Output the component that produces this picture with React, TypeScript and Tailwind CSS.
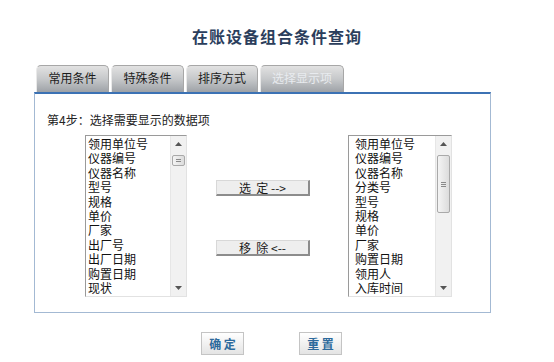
import React from 'react';

const leftItems = ['领用单位号', '仪器编号', '仪器名称', '型号', '规格', '单价', '厂家', '出厂号', '出厂日期', '购置日期', '现状'];
const rightItems = ['领用单位号', '仪器编号', '仪器名称', '分类号', '型号', '规格', '单价', '厂家', '购置日期', '领用人', '入库时间'];

const tabs = [
  { label: '常用条件', w: 'w-[73px]', active: false },
  { label: '特殊条件', w: 'w-[73px]', active: false },
  { label: '排序方式', w: 'w-[72px]', active: false },
  { label: '选择显示项', w: 'w-[84px]', active: true },
];

function ScrollBar({ big }: { big: boolean }) {
  return (
    <div className="w-[16px] h-full bg-[#f1f1f1] border-l border-[#e6e6e6] flex flex-col items-center">
      <div className="h-[16px] w-full flex items-center justify-center">
        <svg width="7" height="4" viewBox="0 0 7 4"><path d="M0 4 L3.5 0 L7 4 Z" fill="#555" /></svg>
      </div>
      {big ? (
        <div className="w-[13px] h-[58px] mt-[3px] rounded-[2px] border border-[#a9a9a9] bg-linear-to-r from-[#f4f4f4] to-[#dcdcdc] flex flex-col items-center justify-center gap-[1px]">
          <div className="w-[5px] h-[1px] bg-[#8a8a8a]" />
          <div className="w-[5px] h-[1px] bg-[#8a8a8a]" />
          <div className="w-[5px] h-[1px] bg-[#8a8a8a]" />
        </div>
      ) : (
        <div className="w-[13px] h-[11px] mt-[3px] rounded-[2px] border border-[#a9a9a9] bg-linear-to-r from-[#f4f4f4] to-[#dcdcdc] flex flex-col items-center justify-center gap-[1px]">
          <div className="w-[5px] h-[1px] bg-[#8a8a8a]" />
          <div className="w-[5px] h-[1px] bg-[#8a8a8a]" />
        </div>
      )}
      <div className="flex-1" />
      <div className="h-[16px] w-full flex items-center justify-center">
        <svg width="7" height="4" viewBox="0 0 7 4"><path d="M0 0 L7 0 L3.5 4 Z" fill="#555" /></svg>
      </div>
    </div>
  );
}

function ListBox({ items, big, w, pl }: { items: string[]; big: boolean; w: string; pl: string }) {
  return (
    <div className={`${w} h-[162px] flex border-l border-t border-[#9a9a9a] border-r border-b border-r-[#e2e2e2] border-b-[#e2e2e2] bg-white`}>
      <div className={`flex-1 pt-[1px] ${pl} text-[12px] leading-[14.4px] text-[#111] overflow-hidden`}>
        {items.map((it) => (
          <div key={it}>{it}</div>
        ))}
      </div>
      <ScrollBar big={big} />
    </div>
  );
}

export default function App() {
  return (
    <div className="w-[554px] h-[362px] bg-white overflow-hidden font-['Noto_Sans_CJK_SC','Noto_Sans',sans-serif]">
      <h1 className="pt-[26px] h-[46px] text-center text-[16px] leading-[20px] font-bold tracking-[1px] text-[#2b3e5c]">
        在账设备组合条件查询
      </h1>

      <div className="flex gap-[2px] ml-[36px] mt-[19px]">
        {tabs.map((t) => (
          <div
            key={t.label}
            className={`${t.w} h-[27px] rounded-t-[5px] border border-b-0 border-[#a7a7a7] border-l-[#e9e9e9] bg-linear-to-b from-[#e2e2e2] via-[#c6c8ca] to-[#9ea2a7] flex items-center justify-center pb-[2px] text-[12px] ${
              t.active ? 'text-[#e8ebef]' : 'text-[#1c1c1c]'
            }`}
          >
            {t.label}
          </div>
        ))}
      </div>

      <div className="ml-[34px] w-[457px] border-t-2 border-t-[#3c72b4] border-x border-b border-x-[#a3b9d3] border-b-[#a3b9d3] pt-[19px] pb-[15px]">
        <div className="pl-[12px] text-[12px] leading-[14px] text-[#222]">第4步：选择需要显示的数据项</div>
        <div className="flex mt-[8px] ml-[50px]">
          <ListBox items={leftItems} big={false} w="w-[102px]" pl="pl-[2px]" />
          <div className="ml-[29px] flex flex-col pt-[45px] gap-[44px]">
            <div className="w-[94px] h-[16px] bg-[#eeeeee] border-t border-l border-[#d8d8d8] border-r-2 border-b-2 border-r-[#8c8c8c] border-b-[#8c8c8c] flex items-center justify-center text-[12px] leading-none text-[#1a1a1a] whitespace-pre">
              选  定 --&gt;
            </div>
            <div className="w-[94px] h-[16px] bg-[#eeeeee] border-t border-l border-[#d8d8d8] border-r-2 border-b-2 border-r-[#8c8c8c] border-b-[#8c8c8c] flex items-center justify-center text-[12px] leading-none text-[#1a1a1a] whitespace-pre">
              移  除 &lt;--
            </div>
          </div>
          <div className="ml-[38px]">
            <ListBox items={rightItems} big={true} w="w-[104px]" pl="pl-[6px]" />
          </div>
        </div>
      </div>

      <div className="flex gap-[55px] ml-[201px] mt-[19px]">
        <div className="w-[43px] h-[23px] border border-[#c4c4c4] bg-linear-to-b from-[#ffffff] to-[#e4e4e4] flex items-center justify-center text-[12px] font-bold text-[#2d6a9c] whitespace-pre">
          确 定
        </div>
        <div className="w-[43px] h-[23px] border border-[#c4c4c4] bg-linear-to-b from-[#ffffff] to-[#e4e4e4] flex items-center justify-center text-[12px] font-bold text-[#2d6a9c] whitespace-pre">
          重 置
        </div>
      </div>
    </div>
  );
}
